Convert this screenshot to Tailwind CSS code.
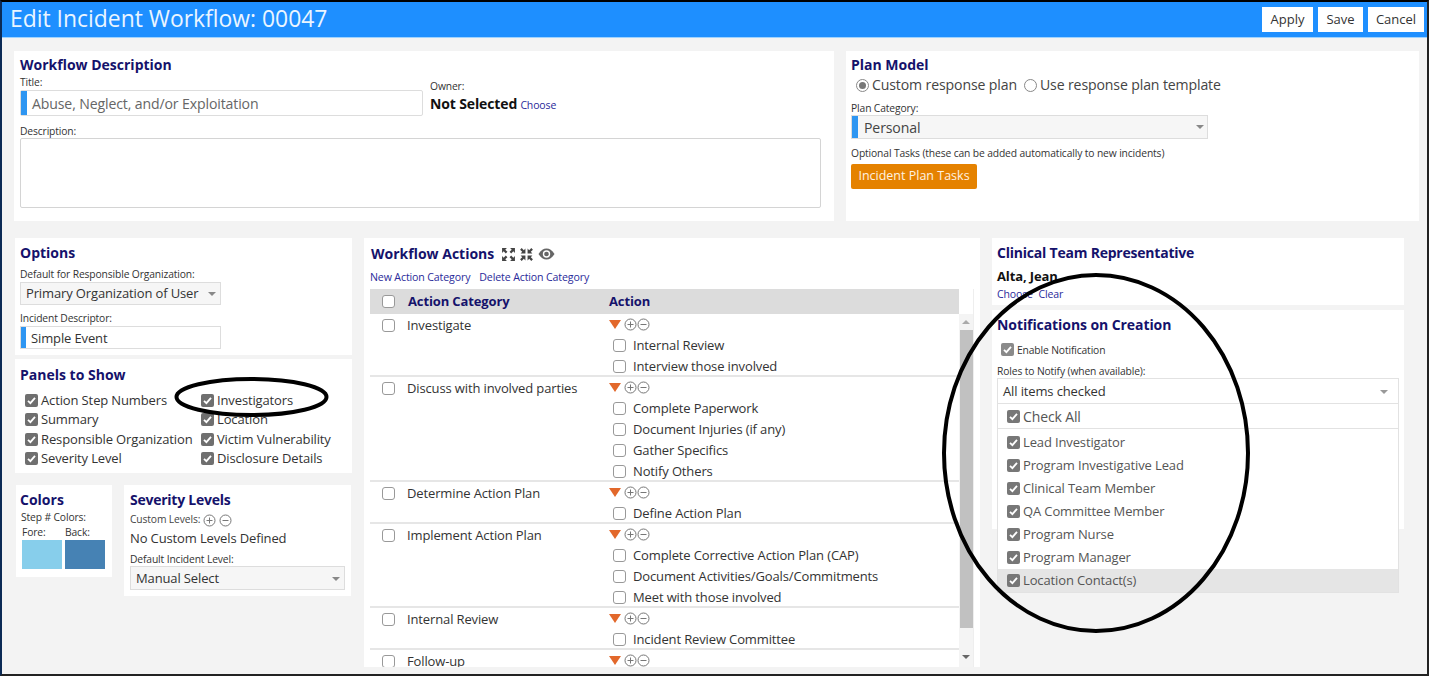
<!DOCTYPE html>
<html lang="en">
<head>
  <meta charset="UTF-8" />
  <title>Edit Incident Workflow</title>
  <script src="https://cdn.jsdelivr.net/npm/@tailwindcss/browser@4"></script>
</head>
<body class="h-[676px] w-[1429px] overflow-hidden bg-black font-['Open_Sans',sans-serif] text-[13px] tracking-[-0.13px] text-[#333]">
  <div class="relative h-[676px] border-t-2 border-b-2 border-l-2 border-r-2 border-t-black border-b-[#222] border-l-[#0b2a55] border-r-[#222] bg-[#f3f3f3]">

    <!-- header -->
    <div class="flex h-[36px] items-center justify-between border-b border-[#9fd3ff] bg-[#1e8fff] pl-[8px] pr-[3px]">
      <h1 class="text-[22.9px] tracking-normal text-[#eaf5ff]">Edit Incident Workflow: 00047</h1>
      <div class="flex gap-[5px] tracking-normal">
        <button class="h-[25px] w-[51px] bg-white pt-[1px] text-[13px] text-[#333]">Apply</button>
        <button class="h-[25px] w-[45px] bg-white pt-[1px] text-[13px] text-[#333]">Save</button>
        <button class="h-[25px] w-[56px] bg-white pt-[1px] text-[13px] text-[#333]">Cancel</button>
      </div>
    </div>

    <!-- top row -->
    <div class="ml-[12px] mt-[13px] flex gap-[12px]">
      <section class="h-[170px] w-[820px] bg-white pl-[6px] pt-[4px]">
        <h2 class="text-[14px] leading-[20px] font-bold tracking-normal text-[#15126b]">Workflow Description</h2>
        <div class="flex">
          <div>
            <p class="h-[15px] text-[10.3px] leading-[15px]">Title:</p>
            <div class="flex h-[26px] w-[403px] rounded-[2px] border border-[#ddd]">
              <span class="w-[6px] bg-[#2e96f2]"></span>
              <span class="pl-[5px] text-[14.1px] leading-[25px] text-[#666]">Abuse, Neglect, and/or Exploitation</span>
            </div>
          </div>
          <div class="ml-[7px] pt-[4px]">
            <p class="h-[15px] text-[10.3px] leading-[15px]">Owner:</p>
            <p class="leading-[19px] whitespace-nowrap"><b class="text-[14px] text-[#111]">Not Selected</b> <a class="text-[10.5px] text-[#2a2a9a]">Choose</a></p>
          </div>
        </div>
        <p class="mt-[8px] h-[14px] text-[10.3px] leading-[14px]">Description:</p>
        <div class="h-[70px] w-[801px] rounded-[2px] border border-[#d4d4d4]"></div>
      </section>

      <section class="h-[170px] w-[573px] bg-white pl-[5px] pt-[4px]">
        <h2 class="text-[14px] leading-[20px] font-bold tracking-normal text-[#15126b]">Plan Model</h2>
        <div class="flex h-[20px] items-center pl-[5px] text-[14.1px] text-[#444]">
          <span class="flex size-[13px] items-center justify-center rounded-full border border-[#888]"><span class="size-[7px] rounded-full bg-[#777]"></span></span>
          <span class="ml-[3px]">Custom response plan</span>
          <span class="ml-[7px] size-[13px] rounded-full border border-[#888]"></span>
          <span class="ml-[3px]">Use response plan template</span>
        </div>
        <p class="mt-[6px] h-[14px] text-[10.3px] leading-[14px]">Plan Category:</p>
        <div class="flex h-[24px] w-[357px] items-center border border-[#ddd] bg-[#f6f6f6]">
          <span class="h-full w-[6px] bg-[#2e96f2]"></span>
          <span class="flex-1 pl-[6px] pt-[1px] text-[14.1px] text-[#444]">Personal</span>
          <span class="mr-[3px] h-0 w-0 border-x-[4px] border-t-[4px] border-x-transparent border-t-[#888]"></span>
        </div>
        <p class="mt-[6px] h-[17px] text-[10.3px] leading-[17px]">Optional Tasks (these can be added automatically to new incidents)</p>
        <button class="mt-[2px] h-[25px] w-[126px] rounded-[2px] bg-[#e58200] text-[12.5px] tracking-normal text-[#fff2e0]">Incident Plan Tasks</button>
      </section>
    </div>

    <!-- lower row -->
    <div class="ml-[13px] mt-[17px] flex">
      <!-- left column -->
      <div class="w-[337px]">
        <section class="h-[117px] bg-white pl-[5px] pt-[5px]">
          <h2 class="text-[14px] leading-[20px] font-bold tracking-normal text-[#15126b]">Options</h2>
          <p class="mt-[4px] h-[15px] text-[10.3px] leading-[15px]">Default for Responsible Organization:</p>
          <div class="flex h-[23px] w-[201px] items-center justify-between border border-[#ddd] bg-[#f6f6f6] pl-[5px] pr-[4px] pt-[1px] text-[13px]">
            <span>Primary Organization of User</span>
            <span class="h-0 w-0 border-x-[4px] border-t-[4px] border-x-transparent border-t-[#888]"></span>
          </div>
          <p class="mt-[6px] h-[15px] text-[10.3px] leading-[15px]">Incident Descriptor:</p>
          <div class="flex h-[23px] w-[201px] border border-[#ddd]">
            <span class="w-[5px] bg-[#2e96f2]"></span>
            <span class="pl-[5px] text-[13px] leading-[22px]">Simple Event</span>
          </div>
        </section>

        <section class="mt-[4px] h-[114px] bg-white pl-[5px] pt-[6px]">
          <h2 class="text-[14px] leading-[20px] font-bold tracking-normal text-[#15126b]">Panels to Show</h2>
          <div class="mt-[6px] grid grid-cols-[176px_1fr] auto-rows-[19.3px] pl-[5px] text-[13px] leading-[19px]">
            <label class="flex items-center gap-[3px]"><svg class="size-[13px]" viewBox="0 0 13 13"><rect width="13" height="13" rx="2" fill="#6f6f6f"/><path d="M3 6.8l2.4 2.4L10 3.8" fill="none" stroke="#fff" stroke-width="1.8"/></svg>Action Step Numbers</label>
            <label class="flex items-center gap-[3px]"><svg class="size-[13px]" viewBox="0 0 13 13"><rect width="13" height="13" rx="2" fill="#6f6f6f"/><path d="M3 6.8l2.4 2.4L10 3.8" fill="none" stroke="#fff" stroke-width="1.8"/></svg>Investigators</label>
            <label class="flex items-center gap-[3px]"><svg class="size-[13px]" viewBox="0 0 13 13"><rect width="13" height="13" rx="2" fill="#6f6f6f"/><path d="M3 6.8l2.4 2.4L10 3.8" fill="none" stroke="#fff" stroke-width="1.8"/></svg>Summary</label>
            <label class="flex items-center gap-[3px]"><svg class="size-[13px]" viewBox="0 0 13 13"><rect width="13" height="13" rx="2" fill="#6f6f6f"/><path d="M3 6.8l2.4 2.4L10 3.8" fill="none" stroke="#fff" stroke-width="1.8"/></svg>Location</label>
            <label class="flex items-center gap-[3px]"><svg class="size-[13px]" viewBox="0 0 13 13"><rect width="13" height="13" rx="2" fill="#6f6f6f"/><path d="M3 6.8l2.4 2.4L10 3.8" fill="none" stroke="#fff" stroke-width="1.8"/></svg>Responsible Organization</label>
            <label class="flex items-center gap-[3px]"><svg class="size-[13px]" viewBox="0 0 13 13"><rect width="13" height="13" rx="2" fill="#6f6f6f"/><path d="M3 6.8l2.4 2.4L10 3.8" fill="none" stroke="#fff" stroke-width="1.8"/></svg>Victim Vulnerability</label>
            <label class="flex items-center gap-[3px]"><svg class="size-[13px]" viewBox="0 0 13 13"><rect width="13" height="13" rx="2" fill="#6f6f6f"/><path d="M3 6.8l2.4 2.4L10 3.8" fill="none" stroke="#fff" stroke-width="1.8"/></svg>Severity Level</label>
            <label class="flex items-center gap-[3px]"><svg class="size-[13px]" viewBox="0 0 13 13"><rect width="13" height="13" rx="2" fill="#6f6f6f"/><path d="M3 6.8l2.4 2.4L10 3.8" fill="none" stroke="#fff" stroke-width="1.8"/></svg>Disclosure Details</label>
          </div>
        </section>

        <div class="mt-[12px] flex items-start">
          <section class="ml-[1px] h-[92px] w-[96px] bg-white pl-[4px] pt-[5px]">
            <h2 class="text-[14px] leading-[20px] font-bold tracking-normal text-[#15126b]">Colors</h2>
            <p class="pl-[1px] h-[14px] text-[10.3px] leading-[14px]">Step # Colors:</p>
            <div class="mt-[1px] flex gap-[3px] pl-[2px] text-[10.3px] leading-[15px]">
              <div><p>Fore:</p><div class="h-[29px] w-[40px] bg-[#87ceeb]"></div></div>
              <div><p>Back:</p><div class="h-[29px] w-[40px] bg-[#4682b4]"></div></div>
            </div>
          </section>
          <section class="ml-[12px] h-[111px] w-[227px] bg-white pl-[6px] pt-[5px]">
            <h2 class="text-[14px] leading-[20px] font-bold tracking-[-0.25px] text-[#15126b]">Severity Levels</h2>
            <div class="mt-[2px] flex h-[16px] items-center gap-[3px] text-[10.3px] text-[#444]">Custom Levels:
              <svg class="size-[13px]" viewBox="0 0 13 13" fill="none" stroke="#777"><circle cx="6.5" cy="6.5" r="5.5"/><path d="M3.5 6.5h6M6.5 3.5v6"/></svg>
              <svg class="size-[13px]" viewBox="0 0 13 13" fill="none" stroke="#777"><circle cx="6.5" cy="6.5" r="5.5"/><path d="M3.5 6.5h6"/></svg>
            </div>
            <p class="mt-[1px] h-[18px] text-[13px] leading-[18px]">No Custom Levels Defined</p>
            <p class="mt-[6px] h-[13px] text-[10.3px] leading-[13px]">Default Incident Level:</p>
            <div class="flex h-[24px] w-[215px] items-center justify-between border border-[#ddd] bg-[#f6f6f6] pl-[5px] pr-[4px] pt-[1px] text-[13px]">
              <span>Manual Select</span>
              <span class="h-0 w-0 border-x-[4px] border-t-[4px] border-x-transparent border-t-[#888]"></span>
            </div>
          </section>
        </div>
      </div>

      <!-- workflow actions -->
      <section class="ml-[12px] h-[429px] w-[616px] bg-white pl-[6px] pt-[6px]">
        <div class="flex h-[20px] items-center">
          <h2 class="pl-[1px] text-[14px] leading-[20px] font-bold tracking-normal text-[#15126b]">Workflow Actions</h2>
          <svg class="ml-[7px] size-[15px]" viewBox="0 0 14 14" fill="#444"><path d="M1 1h4.500L4 2.500 6 4.500 4.500 6 2.500 4 1 5.500zM13 1v4.500L11.500 4 9.500 6 8 4.500 10 2.500 8.500 1zM1 13V8.500L2.500 10l2-2L6 9.500l-2 2L5.500 13zM13 13H8.500l1.500-1.500-2-2L9.500 8l2 2L13 8.500z"/></svg>
          <svg class="ml-[3px] size-[15px]" viewBox="0 0 14 14" fill="#444"><path d="M6 6H1.500L3 4.500 1 2.500 2.500 1l2 2L6 1.500zM8 6V1.500L9.500 3l2-2L13 2.500l-2 2L12.500 6zM6 8v4.500L4.500 11l-2 2L1 11.500l2-2L1.500 8zM8 8h4.500L11 9.500l2 2-1.500 1.500-2-2L8 12.500z"/></svg>
          <svg class="ml-[4px] h-[12px] w-[17px]" viewBox="0 0 17 12"><path d="M.5 6C3 2 5.500.5 8.500.5S14 2 16.500 6C14 10 11.500 11.500 8.500 11.500S3 10 .5 6z" fill="#666"/><circle cx="8.500" cy="6" r="3.700" fill="#fff"/><circle cx="8.500" cy="6" r="2.300" fill="#666"/></svg>
        </div>
        <p class="mt-[5px] flex h-[16px] gap-[9px] text-[10.6px] leading-[16px] text-[#2a2a9a]"><a>New Action Category</a><a>Delete Action Category</a></p>
        <div class="mt-[4px] w-[604px] border-r border-[#eee]">
          <div class="flex h-[25px] w-[589px] items-center bg-[#dcdcdc] text-[13px] font-bold text-[#15126b]">
            <span class="ml-[12px] size-[13px] rounded-[3px] border border-[#999] bg-white"></span>
            <span class="ml-[13px] w-[201px]">Action Category</span>
            <span>Action</span>
          </div>
          <div class="flex h-[353px] overflow-hidden">
            <div class="w-[589px]">
              <div class="flex h-[63px] border-b-2 border-[#e6e6e6]">
                <div class="flex h-[23px] w-[239px] items-center"><span class="ml-[12px] size-[13px] rounded-[3px] border border-[#999]"></span><span class="ml-[12px]">Investigate</span></div>
                <div>
                  <div class="flex h-[21px] items-center"><span class="h-0 w-0 border-x-[6px] border-t-[9px] border-x-transparent border-t-[#e2682b]"></span><svg class="ml-[3px] size-[13px]" viewBox="0 0 13 13" fill="none" stroke="#777"><circle cx="6.5" cy="6.5" r="5.5"/><path d="M3.5 6.5h6M6.5 3.5v6"/></svg><svg class="size-[13px]" viewBox="0 0 13 13" fill="none" stroke="#777"><circle cx="6.5" cy="6.5" r="5.5"/><path d="M3.5 6.5h6"/></svg></div>
                  <div class="flex h-[21px] items-center pl-[4px]"><span class="size-[13px] rounded-[3px] border border-[#999]"></span><span class="ml-[7px]">Internal Review</span></div>
                  <div class="flex h-[21px] items-center pl-[4px]"><span class="size-[13px] rounded-[3px] border border-[#999]"></span><span class="ml-[7px]">Interview those involved</span></div>
                </div>
              </div>
              <div class="flex h-[105px] border-b-2 border-[#e6e6e6]">
                <div class="flex h-[23px] w-[239px] items-center"><span class="ml-[12px] size-[13px] rounded-[3px] border border-[#999]"></span><span class="ml-[12px]">Discuss with involved parties</span></div>
                <div>
                  <div class="flex h-[21px] items-center"><span class="h-0 w-0 border-x-[6px] border-t-[9px] border-x-transparent border-t-[#e2682b]"></span><svg class="ml-[3px] size-[13px]" viewBox="0 0 13 13" fill="none" stroke="#777"><circle cx="6.5" cy="6.5" r="5.5"/><path d="M3.5 6.5h6M6.5 3.5v6"/></svg><svg class="size-[13px]" viewBox="0 0 13 13" fill="none" stroke="#777"><circle cx="6.5" cy="6.5" r="5.5"/><path d="M3.5 6.5h6"/></svg></div>
                  <div class="flex h-[21px] items-center pl-[4px]"><span class="size-[13px] rounded-[3px] border border-[#999]"></span><span class="ml-[7px]">Complete Paperwork</span></div>
                  <div class="flex h-[21px] items-center pl-[4px]"><span class="size-[13px] rounded-[3px] border border-[#999]"></span><span class="ml-[7px]">Document Injuries (if any)</span></div>
                  <div class="flex h-[21px] items-center pl-[4px]"><span class="size-[13px] rounded-[3px] border border-[#999]"></span><span class="ml-[7px]">Gather Specifics</span></div>
                  <div class="flex h-[21px] items-center pl-[4px]"><span class="size-[13px] rounded-[3px] border border-[#999]"></span><span class="ml-[7px]">Notify Others</span></div>
                </div>
              </div>
              <div class="flex h-[42px] border-b-2 border-[#e6e6e6]">
                <div class="flex h-[23px] w-[239px] items-center"><span class="ml-[12px] size-[13px] rounded-[3px] border border-[#999]"></span><span class="ml-[12px]">Determine Action Plan</span></div>
                <div>
                  <div class="flex h-[21px] items-center"><span class="h-0 w-0 border-x-[6px] border-t-[9px] border-x-transparent border-t-[#e2682b]"></span><svg class="ml-[3px] size-[13px]" viewBox="0 0 13 13" fill="none" stroke="#777"><circle cx="6.5" cy="6.5" r="5.5"/><path d="M3.5 6.5h6M6.5 3.5v6"/></svg><svg class="size-[13px]" viewBox="0 0 13 13" fill="none" stroke="#777"><circle cx="6.5" cy="6.5" r="5.5"/><path d="M3.5 6.5h6"/></svg></div>
                  <div class="flex h-[21px] items-center pl-[4px]"><span class="size-[13px] rounded-[3px] border border-[#999]"></span><span class="ml-[7px]">Define Action Plan</span></div>
                </div>
              </div>
              <div class="flex h-[84px] border-b-2 border-[#e6e6e6]">
                <div class="flex h-[23px] w-[239px] items-center"><span class="ml-[12px] size-[13px] rounded-[3px] border border-[#999]"></span><span class="ml-[12px]">Implement Action Plan</span></div>
                <div>
                  <div class="flex h-[21px] items-center"><span class="h-0 w-0 border-x-[6px] border-t-[9px] border-x-transparent border-t-[#e2682b]"></span><svg class="ml-[3px] size-[13px]" viewBox="0 0 13 13" fill="none" stroke="#777"><circle cx="6.5" cy="6.5" r="5.5"/><path d="M3.5 6.5h6M6.5 3.5v6"/></svg><svg class="size-[13px]" viewBox="0 0 13 13" fill="none" stroke="#777"><circle cx="6.5" cy="6.5" r="5.5"/><path d="M3.5 6.5h6"/></svg></div>
                  <div class="flex h-[21px] items-center pl-[4px]"><span class="size-[13px] rounded-[3px] border border-[#999]"></span><span class="ml-[7px]">Complete Corrective Action Plan (CAP)</span></div>
                  <div class="flex h-[21px] items-center pl-[4px]"><span class="size-[13px] rounded-[3px] border border-[#999]"></span><span class="ml-[7px]">Document Activities/Goals/Commitments</span></div>
                  <div class="flex h-[21px] items-center pl-[4px]"><span class="size-[13px] rounded-[3px] border border-[#999]"></span><span class="ml-[7px]">Meet with those involved</span></div>
                </div>
              </div>
              <div class="flex h-[42px] border-b-2 border-[#e6e6e6]">
                <div class="flex h-[23px] w-[239px] items-center"><span class="ml-[12px] size-[13px] rounded-[3px] border border-[#999]"></span><span class="ml-[12px]">Internal Review</span></div>
                <div>
                  <div class="flex h-[21px] items-center"><span class="h-0 w-0 border-x-[6px] border-t-[9px] border-x-transparent border-t-[#e2682b]"></span><svg class="ml-[3px] size-[13px]" viewBox="0 0 13 13" fill="none" stroke="#777"><circle cx="6.5" cy="6.5" r="5.5"/><path d="M3.5 6.5h6M6.5 3.5v6"/></svg><svg class="size-[13px]" viewBox="0 0 13 13" fill="none" stroke="#777"><circle cx="6.5" cy="6.5" r="5.5"/><path d="M3.5 6.5h6"/></svg></div>
                  <div class="flex h-[21px] items-center pl-[4px]"><span class="size-[13px] rounded-[3px] border border-[#999]"></span><span class="ml-[7px]">Incident Review Committee</span></div>
                </div>
              </div>
              <div class="flex h-[17px] overflow-hidden">
                <div class="flex h-[23px] w-[239px] items-center"><span class="ml-[12px] size-[13px] rounded-[3px] border border-[#999]"></span><span class="ml-[12px]">Follow-up</span></div>
                <div class="flex h-[21px] items-center"><span class="h-0 w-0 border-x-[6px] border-t-[9px] border-x-transparent border-t-[#e2682b]"></span><svg class="ml-[3px] size-[13px]" viewBox="0 0 13 13" fill="none" stroke="#777"><circle cx="6.5" cy="6.5" r="5.5"/><path d="M3.5 6.5h6M6.5 3.5v6"/></svg><svg class="size-[13px]" viewBox="0 0 13 13" fill="none" stroke="#777"><circle cx="6.5" cy="6.5" r="5.5"/><path d="M3.5 6.5h6"/></svg></div>
              </div>
            </div>
            <!-- scrollbar -->
            <div class="flex w-[14px] flex-col items-center bg-[#f4f4f4]">
              <span class="mt-[6px] h-0 w-0 border-x-[4px] border-b-[4px] border-x-transparent border-b-[#aaa]"></span>
              <span class="mt-[6px] h-[298px] w-[13px] bg-[#c1c1c1]"></span>
              <span class="mt-[27px] h-0 w-0 border-x-[4px] border-t-[4px] border-x-transparent border-t-[#666]"></span>
            </div>
          </div>
        </div>
      </section>

      <!-- right column -->
      <div class="ml-[12px] w-[412px]">
        <section class="h-[67px] bg-white pl-[5px] pt-[5px]">
          <h2 class="text-[14px] leading-[20px] font-bold tracking-[-0.22px] text-[#15126b]">Clinical Team Representative</h2>
          <p class="mt-[4px] h-[18px] text-[13px] leading-[18px] font-bold text-[#111]">Alta, Jean</p>
          <p class="mt-[2px] h-[14px] text-[10.5px] leading-[14px] text-[#2a2a9a]"><a>Choose</a> <a class="ml-[3px]">Clear</a></p>
        </section>
        <section class="relative mt-[5px] h-[219px] bg-white pl-[5px] pt-[5px]">
          <h2 class="text-[14px] leading-[20px] font-bold tracking-[-0.08px] text-[#15126b]">Notifications on Creation</h2>
          <label class="mt-[5px] flex h-[18px] items-center gap-[3px] pl-[4px] text-[10.3px]"><svg class="size-[13px]" viewBox="0 0 13 13"><rect width="13" height="13" rx="2" fill="#8a8a8a"/><path d="M3 6.8l2.4 2.4L10 3.8" fill="none" stroke="#fff" stroke-width="1.8"/></svg><span class="pt-[3px]">Enable Notification</span></label>
          <p class="mt-[6px] h-[15px] text-[10.3px] leading-[15px]">Roles to Notify (when available):</p>
          <div class="absolute top-[68px] left-[5px] z-10 w-[402px] border border-[#e2e2e2] bg-white text-[13px] text-[#555]">
            <div class="flex h-[25px] items-center justify-between border-b border-[#e2e2e2] pl-[5px] pr-[10px] pt-[2px] text-[#333]">All items checked<span class="h-0 w-0 border-x-[4px] border-t-[4px] border-x-transparent border-t-[#999]"></span></div>
            <label class="flex h-[25px] items-center gap-[3px] border-b border-[#e2e2e2] pl-[9px] text-[14px]"><svg class="size-[13px]" viewBox="0 0 13 13"><rect width="13" height="13" rx="2" fill="#777"/><path d="M3 6.8l2.4 2.4L10 3.8" fill="none" stroke="#fff" stroke-width="1.8"/></svg><span class="pt-[1px]">Check All</span></label>
            <div class="pt-[2px]">
              <label class="flex h-[23px] items-center gap-[3px] pl-[9px]"><svg class="size-[13px]" viewBox="0 0 13 13"><rect width="13" height="13" rx="2" fill="#777"/><path d="M3 6.8l2.4 2.4L10 3.8" fill="none" stroke="#fff" stroke-width="1.8"/></svg>Lead Investigator</label>
              <label class="flex h-[23px] items-center gap-[3px] pl-[9px]"><svg class="size-[13px]" viewBox="0 0 13 13"><rect width="13" height="13" rx="2" fill="#777"/><path d="M3 6.8l2.4 2.4L10 3.8" fill="none" stroke="#fff" stroke-width="1.8"/></svg>Program Investigative Lead</label>
              <label class="flex h-[23px] items-center gap-[3px] pl-[9px]"><svg class="size-[13px]" viewBox="0 0 13 13"><rect width="13" height="13" rx="2" fill="#777"/><path d="M3 6.8l2.4 2.4L10 3.8" fill="none" stroke="#fff" stroke-width="1.8"/></svg>Clinical Team Member</label>
              <label class="flex h-[23px] items-center gap-[3px] pl-[9px]"><svg class="size-[13px]" viewBox="0 0 13 13"><rect width="13" height="13" rx="2" fill="#777"/><path d="M3 6.8l2.4 2.4L10 3.8" fill="none" stroke="#fff" stroke-width="1.8"/></svg>QA Committee Member</label>
              <label class="flex h-[23px] items-center gap-[3px] pl-[9px]"><svg class="size-[13px]" viewBox="0 0 13 13"><rect width="13" height="13" rx="2" fill="#777"/><path d="M3 6.8l2.4 2.4L10 3.8" fill="none" stroke="#fff" stroke-width="1.8"/></svg>Program Nurse</label>
              <label class="flex h-[23px] items-center gap-[3px] pl-[9px]"><svg class="size-[13px]" viewBox="0 0 13 13"><rect width="13" height="13" rx="2" fill="#777"/><path d="M3 6.8l2.4 2.4L10 3.8" fill="none" stroke="#fff" stroke-width="1.8"/></svg>Program Manager</label>
              <label class="flex h-[23px] items-center gap-[3px] bg-[#e5e5e5] pl-[9px]"><svg class="size-[13px]" viewBox="0 0 13 13"><rect width="13" height="13" rx="2" fill="#777"/><path d="M3 6.8l2.4 2.4L10 3.8" fill="none" stroke="#fff" stroke-width="1.8"/></svg>Location Contact(s)</label>
            </div>
          </div>
        </section>
      </div>
    </div>

    <!-- hand-drawn annotation ellipses, page coords offset by the 2px border -->
    <svg class="pointer-events-none absolute top-[-2px] left-[-2px] z-20" width="1429" height="676" fill="none" stroke="#000" stroke-width="4">
      <ellipse cx="251.5" cy="397" rx="75" ry="18"/>
      <ellipse cx="1096" cy="453" rx="152" ry="178"/>
    </svg>
  </div>
</body>
</html>
